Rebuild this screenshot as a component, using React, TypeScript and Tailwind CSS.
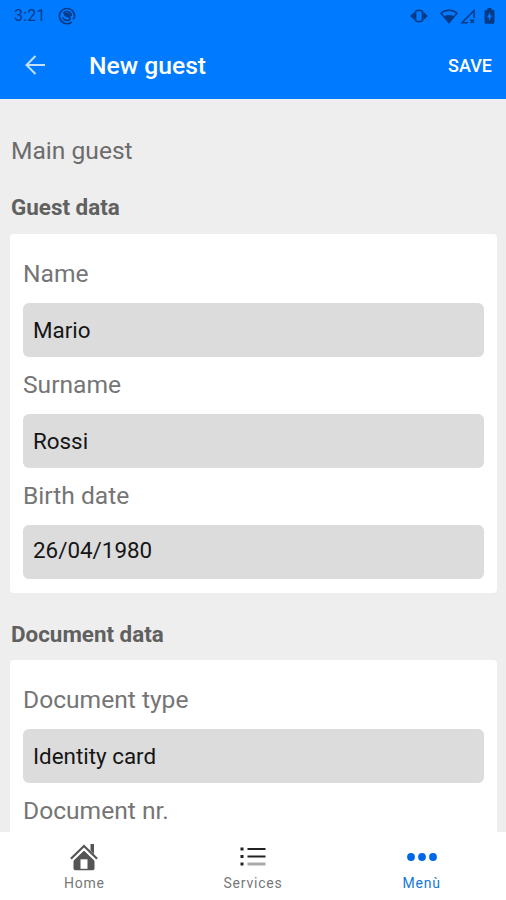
import React from 'react';

type Field = { label: string; value?: string; raised?: boolean };

const guestFields: Field[] = [
  { label: 'Name', value: 'Mario' },
  { label: 'Surname', value: 'Rossi' },
  { label: 'Birth date', value: '26/04/1980', raised: true },
];

const documentFields: Field[] = [
  { label: 'Document type', value: 'Identity card' },
  { label: 'Document nr.', value: '' },
];

const StatusBar: React.FC = () => (
  <div className="flex h-8 items-center justify-between pl-3.5 pr-[11px] text-[#053a86]">
    <div className="flex items-center gap-3">
      <span className="text-[16px] leading-8 tracking-[0.2px]">3:21</span>
      <svg width="18" height="18" viewBox="0 0 18 18" fill="none" stroke="currentColor">
        <path d="M13.800 15A7.600 7.600 0 1 1 16.600 9c0 1.500-.6 2.600-1.600 3.200" strokeWidth="1.700" />
        <path d="M4.800 10.200A4.300 4.300 0 0 0 12.500 11.500M5.500 6.200A4.300 4.300 0 0 1 13.200 9" strokeWidth="1.500" />
        <path d="M5.500 6.500c2.500-1.500 5.500-.5 6.700 1.500l.5 4.200-3.300-2C7.300 10 6 8.500 5.500 6.500Z" fill="currentColor" stroke="none" />
      </svg>
    </div>
    <div className="flex items-center">
      <svg width="18" height="14" viewBox="0 0 18 14" fill="none" stroke="currentColor" className="mr-3">
        <rect x="5.500" y="1.500" width="7" height="11" rx="2" strokeWidth="1.600" />
        <path d="M4.800 2.800 0 7l4.800 4.200ZM13.200 2.800 18 7l-4.800 4.200Z" fill="currentColor" stroke="none" />
      </svg>
      <svg width="18" height="15" viewBox="0 0 18 15" className="mr-0.5">
        <path d="M1 4.300C5 .3 13 .3 17 4.300L9 13.700Z" fill="none" stroke="currentColor" strokeWidth="1.500" />
        <path d="M4 7.300q5-2.600 10 0L9 14Z" fill="currentColor" />
      </svg>
      <svg width="16" height="15" viewBox="0 0 16 15" className="mr-2">
        <path d="M8 13.800H2L14 1.500V9" fill="none" stroke="currentColor" strokeWidth="1.500" />
        <path d="m10.500 10.500 3.500 3.500m0-3.500L10.500 14" stroke="currentColor" strokeWidth="1.500" />
      </svg>
      <svg width="11" height="16" viewBox="0 0 11 16">
        <path fill="currentColor" fillRule="evenodd" d="M3.500 0h4v1.800H9a1.500 1.500 0 0 1 1.500 1.500v11A1.500 1.500 0 0 1 9 15.800H2A1.500 1.500 0 0 1 .5 14.300v-11A1.500 1.500 0 0 1 2 1.800h1.500ZM6 4 3 9.500h2V13l3-5.500H6Z" />
      </svg>
    </div>
  </div>
);

const Header: React.FC = () => (
  <header className="h-[98.500px] shrink-0 bg-[#007aff]">
    <StatusBar />
    <div className="flex h-[66px] items-center pl-[25px] pr-[14px] text-white">
      <button aria-label="Back" className="mr-[44px]">
        <svg width="20" height="20" viewBox="0 0 20 20" fill="none" stroke="#c5e0ff" strokeWidth="2">
          <path d="M20 10H1.500M10.500 1 1.500 10l9 9" />
        </svg>
      </button>
      <h1 className="pt-px text-[24.700px] leading-8 font-medium">New guest</h1>
      <button className="ml-auto text-[18px] font-medium">SAVE</button>
    </div>
  </header>
);

const FormField: React.FC<Field> = ({ label, value, raised }) => (
  <div className="h-[111px]">
    <label className="block h-[43px] text-[24.600px] leading-[28px] text-[#757575]">{label}</label>
    <div
      className={`flex h-[54.500px] items-center rounded-[6px] bg-[#dcdcdc] px-2.5 text-[22.400px] text-[#151515] ${
        raised ? 'pb-[3px]' : 'pt-0.5'
      }`}
    >
      {value}
    </div>
  </div>
);

const FormCard: React.FC<{ fields: Field[] }> = ({ fields }) => (
  <div className="mr-[9px] ml-2.5 rounded-[4px] bg-white pt-[25.700px] pr-[13px] pl-[13px]">
    {fields.map((field) => (
      <FormField key={field.label} {...field} />
    ))}
  </div>
);

const HomeIcon = () => (
  <svg width="28" height="28" viewBox="0 0 28 28">
    <path fill="#555" d="M20.500 1H24v10l-3.500-3.500ZM14 7.500l10.500 9.500v8.500A1.800 1.800 0 0 1 22.700 27.300H5.300A1.800 1.800 0 0 1 3.500 25.500V17Z" />
    <path d="M.9 15.800 14 3l13.100 12.800" fill="none" stroke="#555" strokeWidth="2.200" />
    <path d="M2.500 17.800 14 6.600l11.500 11.200" fill="none" stroke="#fff" strokeWidth="1.200" />
    <path fill="#fff" d="M10.500 16.300h7v9.500h-7z" />
  </svg>
);

const ListIcon = () => (
  <svg width="26" height="20" viewBox="0 0 26 20">
    <path fill="#222" d="M.5.500h3v3h-3zM.5 8h3v3h-3zM.5 15.500h3v3h-3zM7.500 1h18v2h-18zM7.500 8.500h18v2h-18z" />
    <path fill="#aaa" d="M7.500 15.500h18v3h-18z" />
  </svg>
);

const DotsIcon = () => (
  <svg width="30" height="8" viewBox="0 0 30 8" fill="#0068e8">
    <circle cx="4" cy="4" r="3.900" />
    <circle cx="15" cy="4" r="3.900" />
    <circle cx="26" cy="4" r="3.900" />
  </svg>
);

const tabs = [
  { label: 'Home', icon: <HomeIcon /> },
  { label: 'Services', icon: <ListIcon /> },
  { label: 'Menù', icon: <DotsIcon />, active: true },
];

const TabBar: React.FC = () => (
  <nav className="grid h-[68px] shrink-0 grid-cols-3 bg-white pt-2.5">
    {tabs.map((tab) => (
      <button key={tab.label} className="flex flex-col items-center">
        <span className="flex h-[29px] items-center">{tab.icon}</span>
        <span className={`mt-0.5 text-[14px] leading-5 tracking-[0.800px] ${tab.active ? 'text-[#1477dc]' : 'text-[#777]'}`}>
          {tab.label}
        </span>
      </button>
    ))}
  </nav>
);

const App: React.FC = () => (
  <div className="flex h-screen flex-col overflow-hidden bg-[#eeeeee] font-['Roboto',sans-serif]">
    <Header />
    <main className="min-h-0 flex-1 overflow-hidden">
      <p className="mt-[38.500px] ml-[11px] text-[24.600px] leading-[28px] text-[#6c6c6c]">Main guest</p>
      <h2 className="mt-7 mb-[13px] ml-[11px] text-[22.400px] leading-[28px] font-bold text-[#606060]">Guest data</h2>
      <FormCard fields={guestFields} />
      <h2 className="mt-[27px] mb-[12.300px] ml-[11px] text-[22.400px] leading-[28px] font-bold text-[#606060]">Document data</h2>
      <FormCard fields={documentFields} />
    </main>
    <TabBar />
  </div>
);

export default App;
